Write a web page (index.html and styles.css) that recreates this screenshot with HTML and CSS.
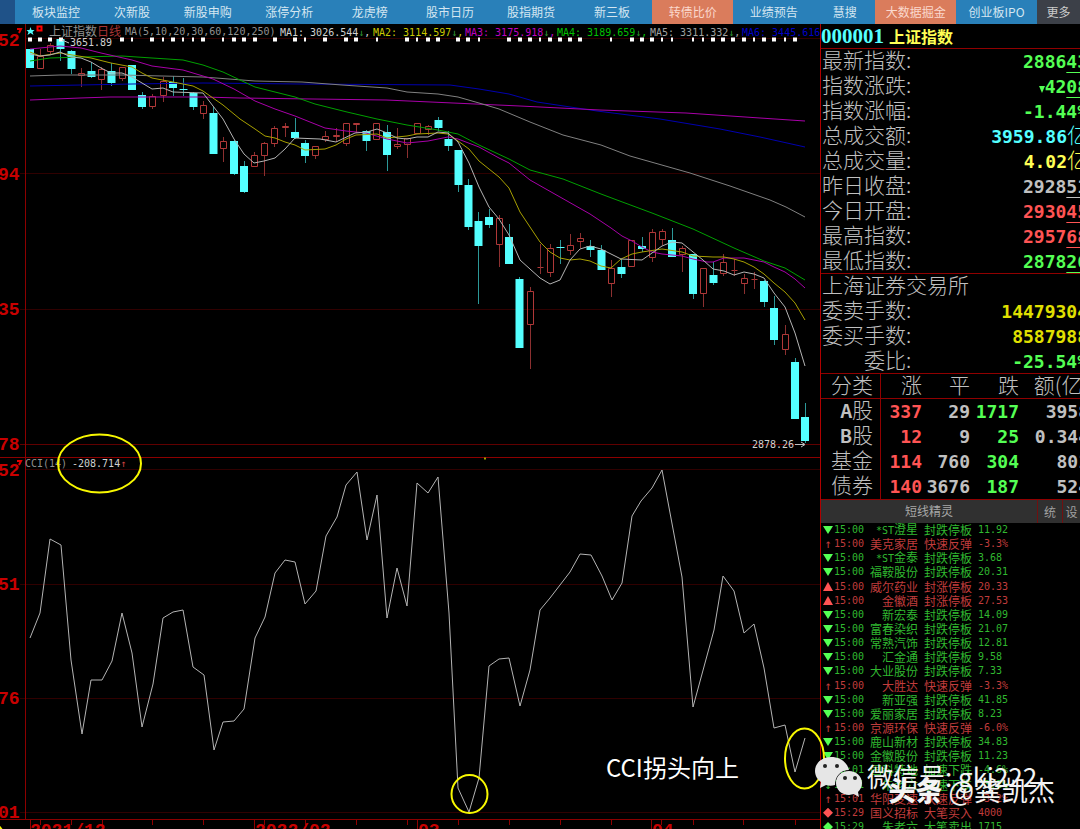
FILE: index.html
```html
<!DOCTYPE html>
<html lang="zh-CN">
<head>
<meta charset="utf-8">
<meta name="viewport" content="width=device-width, initial-scale=1">
<title>上证指数 日线</title>
<link rel="stylesheet" href="styles.css">
</head>
<body>
<div class="app">
<nav class="nav">
<span class="nav-edge"></span>
<a href="#">板块监控</a><a href="#">次新股</a><a href="#">新股申购</a><a href="#">涨停分析</a><a href="#">龙虎榜</a><a href="#">股市日历</a><a href="#">股指期货</a><a href="#">新三板</a><a href="#" class="hot">转债比价</a><a href="#">业绩预告</a><a href="#">慧搜</a><a href="#" class="hot">大数据掘金</a><a href="#">创业板IPO</a><a href="#" class="more">更多</a>
</nav>
<main class="main">
<section class="chart">
<svg viewBox="0 24 820 805" role="img" aria-label="上证指数日线与CCI指标">
<g class="grid">
<path d="M25 38.5H820M20 173.5H820M20 309.5H820M25 469.5H820M20 584.5H820M20 698.5H820M20 812.5H820"/>
<path class="frame" d="M20 444.5H820"/>
<path class="frame strong" d="M25.5 24V819M0 457.5H820M0 819.5H820"/>
<path class="tick" d="M30.5 820v9M40.5 820v5M71.5 820v5M102.5 820v5M152.5 820v5M203.5 820v5M254.5 820v9M264.5 820v5M305.5 820v5M356.5 820v5M407.5 820v5M417.5 820v9M458.5 820v5M509.5 820v5M560.5 820v5M611.5 820v5M651.5 820v9M661.5 820v5M693.5 820v5M743.5 820v5M795.5 820v5"/>
</g>
<g class="axis">
<text x="-2" y="46">52</text><text x="-2" y="180">94</text><text x="-2" y="315">35</text><text x="-2" y="450">78</text><text x="-2" y="476">52</text><text x="-2" y="590">51</text><text x="-2" y="704">76</text><text x="-2" y="818">01</text>
<text x="30" y="836">2021/12</text><text x="255" y="836">2022/02</text><text x="418" y="836">03</text><text x="652" y="836">04</text>
<path d="M17 29h4l-2 4M17 461h4l-2 4"/>
</g>
<path class="ma red-body" d="M37.500 56.500h6v12h-6zM47.500 45.500h6v6h-6zM78.500 73.500h6v2h-6zM98.500 69.500h6v10h-6zM119.500 67.500h6v11h-6zM149.500 96.500h6v10h-6zM160.500 81.500h6v14h-6zM200.500 105.500h6v8h-6zM220.500 141.500h6v7h-6zM251.500 155.500h6v11h-6zM261.500 143.500h6v12h-6zM271.500 128.500h6v15h-6zM282.500 126.500h6v1h-6zM312.500 146.500h6v9h-6zM322.500 136.500h6v3h-6zM333.500 135.500h6v1h-6zM343.500 123.500h6v20h-6zM353.500 123.500h6v1h-6zM373.500 123.500h6v16h-6zM394.500 144.500h6v2h-6zM404.500 138.500h6v6h-6zM414.500 123.500h6v10h-6zM425.500 126.500h6v3h-6zM496.500 218.500h6v26h-6zM527.500 291.500h6v33h-6zM537.500 267.500h6M547.500 248.500h6v24h-6zM567.500 245.500h6v5h-6zM577.500 238.500h6v3h-6zM608.500 268.500h6v15h-6zM628.500 240.500h6v26h-6zM649.500 232.500h6v25h-6zM659.500 231.500h6v8h-6zM679.500 248.500h6v6h-6zM700.500 268.500h6v25h-6zM720.500 262.500h6v11h-6zM731.500 270.500h6M741.500 278.500h6v5h-6zM751.500 279.500h6M782.500 334.500h6v15h-6z"/>
<path class="red-wick" d="M40.500 49V56M50.500 43V45M50.500 52V54M81.500 68V73M81.500 76V87M101.500 67V69M101.500 80V90M122.500 78V81M152.500 94V96M152.500 107V109M163.500 77V81M163.500 96V102M203.500 101V105M203.500 114V119M223.500 137V141M223.500 149V162M254.500 152V155M264.500 142V143M264.500 156V176M274.500 126V128M274.500 144V147M285.500 123V126M285.500 128V137M315.500 156V159M325.500 131V136M325.500 139V142M336.500 128V135M336.500 137V142M346.500 144V146M356.500 125V133M397.500 128V144M397.500 147V149M407.500 145V158M428.500 125V126M428.500 130V135M499.500 215V218M499.500 245V267M530.500 287V291M530.500 325V369M540.500 244V274M550.500 244V248M550.500 273V277M570.500 234V245M570.500 251V255M580.500 233V238M580.500 242V248M611.500 260V268M611.500 284V297M652.500 229V232M652.500 258V262M662.500 229V231M662.500 240V245M682.500 246V248M682.500 255V272M703.500 294V307M723.500 254V262M723.500 274V276M734.500 259V276M744.500 274V278M744.500 284V294M754.500 272V289M785.500 325V334M785.500 350V355"/>
<path class="cyan-wick" d="M60.500 38V61M71.500 50V74M91.500 62V78M111.500 63V86M142.500 92V109M173.500 76V96M183.500 78V96M193.500 92V110M213.500 107V154M234.500 140V175M244.500 161V193M295.500 118V139M305.500 140V163M366.500 130V151M387.500 125V171M438.500 117V131M448.500 131V151M458.500 150V192M468.500 179V230M478.500 212V304M489.500 209V228M509.500 224V264M519.500 277V348M560.500 240V264M590.500 240V257M601.500 245V270M621.500 259V278M642.500 237V252M672.500 228V257M693.500 254V299M713.500 262V285M764.500 280V307M774.500 296V345M795.500 358V419M805.500 403V443"/>
<path class="cyan-body" d="M30 49V68M60.500 39V49M71.500 51V69M91.500 71V77M111.500 71V83M132 65V90M142 95V107M173 82V88M183.500 89V90M193.500 93V107M213.500 113V154M234 141V174M244 166V192M295 132V138M305 143V156M366.500 131V141M387 132V155M438.500 120V128M448.500 139V146M458.500 150V185M468.500 185V227M478.500 221V246M489 217V225M509 237V264M519.500 279V348M560.500 247V248M590.500 246V250M601.500 250V270M621.500 267V274M642 246V249M672 240V257M693 254V294M713.500 275V283M764 281V302M774 308V340M795 362V419M805 417V441"/>
<g class="ma">
<polyline class="blue" points="30,86 132,84 203,83 300,84 450,85 479,89 509,94 537,102 597,111 660,119 720,129 760,137 805,147"/>
<polyline class="magenta" points="30,100 80,98 110,97 203,97 240,98 386,100 520,106 600,110 686,113 760,118 805,121"/>
<polyline class="gray" points="30,76 60,75 122,75 203,77 255,81 302,82 342,85 387,88 407,92 438,94 458,97 479,103 499,109 530,122 563,135 601,145 630,156 690,173 730,186 770,200 786,207 805,217"/>
<polyline class="green" points="30,61 50,58 81,57 122,56 152,58 183,60 203,65 223,72 240,80 255,87 295,97 315,104 347,112 377,119 407,125 438,130 458,134 479,145 509,159 530,170 563,179 601,194 617,200 652,213 693,229 734,248 764,261 785,268 805,280"/>
<polyline class="magenta" points="30,49 60,46 81,48 101,53 132,60 152,66 183,70 213,79 234,89 255,101 275,109 295,116 315,124 325,128 346,131 366,133 387,139 407,143 428,141 448,137 458,139 479,147 499,158 509,163 530,180 560,197 590,214 611,228 622,236 632,241 642,247 652,252 662,254 682,256 693,259 707,262 713,262 724,258 744,258 764,262 774,267 785,272 795,279 805,288"/>
<polyline class="yellow" points="30,52 40,56 60,53 91,58 111,63 132,67 142,73 152,78 173,82 193,86 203,91 223,105 240,119 255,129 265,136 275,138 285,142 295,145 305,150 325,149 336,145 346,139 356,135 377,134 387,138 407,136 417,134 438,133 448,134 458,141 469,149 479,161 499,177 509,188 520,212 530,227 540,242 550,252 560,258 570,260 580,259 590,261 601,266 611,268 621,259 632,254 642,252 662,249 682,252 693,256 713,257 724,257 734,259 744,262 754,267 764,274 774,283 785,292 795,303 805,320"/>
<polyline class="white" points="30,54 40,56 50,55 60,52 71,57 81,58 91,62 101,68 111,73 122,73 132,77 142,83 152,89 163,88 173,92 203,93 213,106 223,119 234,139 244,154 254,163 264,161 275,158 285,149 295,138 320,139 336,142 355,133 367,132 377,129 387,133 397,138 407,139 417,137 428,137 438,132 448,133 458,142 469,163 479,187 489,207 499,219 509,235 520,260 530,269 540,278 550,284 560,280 570,260 580,249 590,246 601,249 621,259 642,260 662,246 672,242 682,243 703,260 713,269 724,271 734,275 744,272 754,274 764,278 774,293 785,307 795,333 805,366"/>
<polyline class="white" points="30,638 40,613 50,539 61,545 71,660 82,734 91,680 102,680 112,661 122,613 132,653 142,727 153,684 163,618 173,612 183,610 193,667 204,675 214,750 223,722 234,721 244,709 255,638 265,617 275,573 285,560 295,562 305,604 316,591 326,536 337,517 346,485 357,472 367,540 377,495 387,618 397,568 407,606 417,483 428,493 438,477 449,613 458,788 469,812 479,778 489,666 499,659 509,658 520,706 530,670 540,610 550,598 570,572 580,554 591,555 602,576 612,600 622,583 632,516 641,501 652,488 662,470 682,577 693,707 714,630 723,576 734,591 744,633 754,624 764,668 774,728 785,725 795,772 805,738"/>
</g>
<path class="dots" d="M28 39.500h4m6 0h4m6 0h4m7 0h4M120 39.500h4M150 39.500h4M171 39.500h4M201 39.500h4M232 39.500h4m6 0h4m7 0h4M273 39.500h4M293 39.500h4M323 39.500h4M344 39.500h4m6 0h4M405 39.500h4M426 39.500h4m6 0h4M456 39.500h4m6 0h4M507 39.500h4m7 0h4m6 0h4M548 39.500h4m6 0h4m6 0h4m6 0h4M630 39.500h4m6 0h4m6 0h4M711 39.500h4m6 0h4m6 0h4m7 0h4M762 39.500h4m6 0h4M793 39.500h4M131 39.500h2M162 39.500h2M182 39.500h2M192 39.500h2M222 39.500h2M304 39.500h2M376 39.500h2M416 39.500h2M478 39.500h2M539 39.500h2M610 39.500h2M661 39.500h2M671 39.500h2M692 39.500h2M702 39.500h2M753 39.500h2M784 39.500h2"/>
<g class="legend">
<path class="star" d="M30.500 27l1 3h3l-2 2 1 3-3-2-3 2 1-3-2-2h3z"/>
<path class="mark" d="M37.500 26.500h4v4h-4z"/>
<text class="cjk dim" x="49" y="36">上证指数</text><text class="cjk daily" x="97" y="36">日线</text>
<text class="dim" x="125" y="35">MA(5,10,20,30,60,120,250)</text>
<text class="c-white" x="280" y="36">MA1: 3026.544<tspan class="down">↓</tspan>,</text>
<text class="c-yellow" x="373" y="36">MA2: 3114.597<tspan class="down">↓</tspan>,</text>
<text class="c-magenta" x="465" y="36">MA3: 3175.918<tspan class="down">↓</tspan>,</text>
<text class="c-green" x="557" y="36">MA4: 3189.659<tspan class="down">↓</tspan>,</text>
<text class="c-gray" x="650" y="36">MA5: 3311.332<tspan class="down">↓</tspan>,</text>
<text class="c-blue" x="742" y="36">MA6: 3445.616</text>
<text class="c-white" x="70" y="46">3651.89</text>
<text class="c-white" x="752" y="448">2878.26</text>
<text class="dim" x="25" y="467">CCI(14)</text><text class="c-white" x="72" y="467">-208.714<tspan class="up">↑</tspan></text>
<path class="pointer" d="M62 40l7 3M795 444.500h9M801 442l4 2.500-4 2.500"/>
<path class="speck" d="M484 458.500h2"/>
</g>
<g class="rings"><ellipse cx="99.500" cy="463.500" rx="41.500" ry="29"/><ellipse cx="469.500" cy="794" rx="18" ry="19"/><ellipse cx="804.500" cy="758.500" rx="19.500" ry="30"/><path d="M-1 826l3 4"/></g>
<text class="note" x="606" y="777">CCI拐头向上</text>
</svg>
</section>
<aside class="side">
<h1 class="title"><span class="code">000001</span>上证指数</h1>
<dl class="quotes">
<div><dt>最新指数:</dt><dd class="g">2886<u>43</u></dd></div>
<div><dt>指数涨跌:</dt><dd class="g"><i class="arrow"></i>42<u>08</u></dd></div>
<div><dt>指数涨幅:</dt><dd class="g">-1.44%</dd></div>
<div><dt>总成交额:</dt><dd class="c">3959.86<b>亿</b></dd></div>
<div><dt>总成交量:</dt><dd class="y">4.02<b>亿</b></dd></div>
<div><dt>昨日收盘:</dt><dd class="w">2928<u>51</u></dd></div>
<div><dt>今日开盘:</dt><dd class="r">2930<u>45</u></dd></div>
<div><dt>最高指数:</dt><dd class="r">2957<u>68</u></dd></div>
<div><dt>最低指数:</dt><dd class="g">2878<u>26</u></dd></div>
</dl>
<dl class="quotes">
<div><dt>上海证券交易所</dt></div>
<div><dt>委卖手数:</dt><dd class="gold">14479304</dd></div>
<div><dt>委买手数:</dt><dd class="gold">8587988</dd></div>
<div><dt class="indent">委比:</dt><dd class="g">-25.54%</dd></div>
</dl>
<table class="breadth">
<thead><tr><th>分类</th><th>涨</th><th>平</th><th>跌</th><th>额(亿)</th></tr></thead>
<tbody>
<tr><th><span>A</span>股</th><td class="r">337</td><td>29</td><td class="g">1717</td><td>3958</td></tr>
<tr><th><span>B</span>股</th><td class="r">12</td><td>9</td><td class="g">25</td><td>0.344</td></tr>
<tr><th>基金</th><td class="r">114</td><td>760</td><td class="g">304</td><td>801</td></tr>
<tr><th>债券</th><td class="r">140</td><td>3676</td><td class="g">187</td><td>524</td></tr>
</tbody>
</table>
<div class="bar"><h2>短线精灵</h2><button type="button">统</button><button type="button">设</button></div>
<ul class="feed">
<li class="fall"><i></i><time>15:00</time><span><em>*ST</em>澄星</span><span>封跌停板</span><data>11.92</data></li>
<li class="jump"><i>↑</i><time>15:00</time><span>美克家居</span><span>快速反弹</span><data>-3.3%</data></li>
<li class="fall"><i></i><time>15:00</time><span><em>*ST</em>金泰</span><span>封跌停板</span><data>3.68</data></li>
<li class="fall"><i></i><time>15:00</time><span>福鞍股份</span><span>封跌停板</span><data>20.31</data></li>
<li class="rise"><i></i><time>15:00</time><span>威尔药业</span><span>封涨停板</span><data>20.33</data></li>
<li class="rise"><i></i><time>15:00</time><span>金徽酒</span><span>封涨停板</span><data>27.53</data></li>
<li class="fall"><i></i><time>15:00</time><span>新宏泰</span><span>封跌停板</span><data>14.09</data></li>
<li class="fall"><i></i><time>15:00</time><span>富春染织</span><span>封跌停板</span><data>21.07</data></li>
<li class="fall"><i></i><time>15:00</time><span>常熟汽饰</span><span>封跌停板</span><data>12.81</data></li>
<li class="fall"><i></i><time>15:00</time><span>汇金通</span><span>封跌停板</span><data>9.58</data></li>
<li class="fall"><i></i><time>15:00</time><span>大业股份</span><span>封跌停板</span><data>7.33</data></li>
<li class="jump"><i>↑</i><time>15:00</time><span>大胜达</span><span>快速反弹</span><data>-3.3%</data></li>
<li class="fall"><i></i><time>15:00</time><span>新亚强</span><span>封跌停板</span><data>41.85</data></li>
<li class="fall"><i></i><time>15:00</time><span>爱丽家居</span><span>封跌停板</span><data>8.23</data></li>
<li class="jump"><i>↑</i><time>15:00</time><span>京源环保</span><span>快速反弹</span><data>-6.0%</data></li>
<li class="fall"><i></i><time>15:00</time><span>鹿山新材</span><span>封跌停板</span><data>34.83</data></li>
<li class="fall"><i></i><time>15:00</time><span>金徽股份</span><span>封跌停板</span><data>11.23</data></li>
<li class="drop"><i>↓</i><time>15:01</time><span>国科特地</span><span>加速下跌</span><data>-4.6%</data></li>
<li class="drop"><i>↓</i><time>15:01</time><span>朱老六</span><span>加速下跌</span><data>-3.2%</data></li>
<li class="jump"><i>↑</i><time>15:01</time><span>华阳变速</span><span>快速反弹</span><data>-3.2%</data></li>
<li class="buy"><i></i><time>15:29</time><span>国义招标</span><span>大笔买入</span><data>4000</data></li>
<li class="sell"><i></i><time>15:29</time><span>朱老六</span><span>大笔卖出</span><data>1715</data></li>
</ul>
</aside>
</main>
<div class="watermark">
<svg class="wechat" viewBox="0 0 48 42" aria-hidden="true">
<path d="M17 1C8 1 1 7 1 15c0 5 3 9 6 11l-1 6 6-3c3 1 6 1 9 0 0-9 6-15 14-15C33 6 26 1 17 1z"/>
<path d="M35 15c-8 0-13 5-13 12s6 12 13 12l5-1 5 3-1-5c2-2 4-5 4-9 0-7-6-12-13-12z"/>
<g class="eyes"><circle cx="11" cy="10" r="2"/><circle cx="23" cy="10" r="2"/><circle cx="31" cy="22" r="2"/><circle cx="41" cy="22" r="2"/></g>
</svg>
<p class="account">微信号: gkj222</p>
<p class="author"><strong>头条</strong> @龚凯杰</p>
</div>
</div>
</body>
</html>
```

FILE: styles.css
```css
* { box-sizing: border-box; margin: 0; padding: 0; }
html, body { height: 100%; background: #000; }
body { color: #c0c0c0; font: 12px/14px "DejaVu Sans Mono", "Noto Sans CJK SC", monospace; overflow: hidden; }
.app { position: relative; display: flex; flex-direction: column; height: 100vh; overflow: hidden; }

.nav {
  display: grid; flex: none; height: 24px; background: #2980b9;
  grid-template-columns: 15px 82fr 70fr 82fr 81fr 80fr 81fr 81fr 81fr 81fr 81fr 61fr 81fr 81fr 43fr;
}
.nav a { display: flex; align-items: center; justify-content: center; color: #d4e6f1; text-decoration: none; font-family: "Noto Sans CJK SC", sans-serif; white-space: nowrap; }
.nav-edge { background: #1f5288; }
.nav .hot { background: #da7c5c; color: #fbd9ce; }
.nav .more { background: #3c4048; color: #ccc; }

.main { display: grid; grid-template-columns: minmax(0, 1fr) 260px; flex: 1; min-height: 0; }
.chart { position: relative; z-index: 1; min-width: 0; }
.chart svg { display: block; width: 100%; overflow: visible; }
.grid path { fill: none; stroke: #300000; }
.grid .frame { stroke: #600000; }
.grid .strong { stroke: #8c0000; }
.grid .tick { stroke: #900000; }
.axis text { fill: #c80000; font: bold 18px "Liberation Mono", monospace; }
.axis path { fill: none; stroke: #e00000; stroke-width: 2; }
.ma, .ma polyline { fill: none; }
.white { stroke: #b4b4b4; }
.gray { stroke: #808080; }
.yellow { stroke: #a8a000; }
.magenta { stroke: #a800a8; }
.green { stroke: #00a000; }
.blue { stroke: #0000b0; }
.red-body { stroke: #b03838; }
.red-wick { stroke: #8c3030; }
.cyan-wick { stroke: #2c9898; }
.cyan-body { stroke: #54ffff; stroke-width: 8; }
.dots { stroke: #fff; stroke-width: 4; fill: none; }
.legend text { font: 10px "DejaVu Sans Mono", "Noto Sans CJK SC", monospace; white-space: pre; }
.legend .cjk { font: 12px "Noto Sans CJK SC", sans-serif; }
.legend path { fill: none; }
.legend .star { fill: #54ffff; }
.legend .mark { stroke: #f00; stroke-width: 2; }
.pointer { stroke: #c0c0c0; }
.speck { stroke: #a0a000; stroke-width: 2; }
.dim { fill: #909090; }
.daily { fill: #a83434; }
.c-white { fill: #d0d0d0; }
.c-gray { fill: #a0a0a0; }
.c-yellow { fill: #c8c800; }
.c-magenta { fill: #c000c0; }
.c-green { fill: #00c000; }
.c-blue { fill: #0000c8; }
.down { fill: #309830; }
.up { fill: #d04040; }
.rings { fill: none; stroke: #f8f800; stroke-width: 2; }
.note { fill: #fff; font: 24px "Noto Sans CJK SC", sans-serif; }

.side { display: flex; flex-direction: column; min-width: 0; min-height: 0; overflow: hidden; border-left: 1px solid #b00000; }
.title { flex: none; display: flex; align-items: center; gap: 5px; height: 25px; border-bottom: 1px solid #900000; color: #ffff54; font: bold 16px/24px "Noto Sans CJK SC", sans-serif; }
.title .code { color: #54ffff; font: bold 21px/24px "Liberation Serif", serif; }
.quotes { flex: none; margin-right: -8px; border-bottom: 1px solid #900000; font-weight: bold; }
.quotes div { display: flex; justify-content: space-between; height: 25px; line-height: 25px; }
.quotes div:last-child { height: 24px; }
.quotes dt { font: 300 21px/21px "Noto Sans CJK SC", sans-serif; padding-left: 1px; white-space: nowrap; }
.quotes .indent { padding-left: 43px; }
.quotes dd { font-size: 18px; white-space: nowrap; }
.quotes dd b { font: 300 21px/21px "Noto Sans CJK SC", sans-serif; }
.quotes u { text-decoration-thickness: 1px; text-underline-offset: 4px; }
.arrow { display: inline-block; border: 3px solid transparent; border-top: 7px solid; border-bottom: 0; }
.g { color: #54ff54; }
.r { color: #ff5454; }
.c { color: #54ffff; }
.y { color: #ffff54; }
.w { color: #c0c0c0; }
.gold { color: #e0e000; }

.breadth { flex: none; width: calc(100% + 9px); table-layout: fixed; border-collapse: separate; border-spacing: 0; text-align: right; }
.breadth th { width: 60px; height: 25px; padding-right: 7px; border-right: 1px solid #900000; font: 300 21px/21px "Noto Sans CJK SC", sans-serif; white-space: nowrap; vertical-align: top; }
.breadth thead th { border-bottom: 1px solid #900000; }
.breadth thead th:not(:first-child) { padding-right: 0; border-right: 0; }
.breadth thead th:nth-child(2) { width: 41px; }
.breadth thead th:nth-child(3) { width: 48px; }
.breadth thead th:nth-child(4) { width: 49px; }
.breadth thead th:nth-child(5) { width: auto; }
.breadth th span { font-weight: bold; font-size: 18px; }
.breadth td { font: bold 18px/24px "DejaVu Sans Mono", monospace; }

.bar { display: flex; flex: none; height: 24px; background: #303030; border-top: 1px solid #900000; }
.bar h2 { flex: 1; text-align: center; font: 12px/22px "Noto Sans CJK SC", sans-serif; color: #a8a8a8; }
.bar button { width: 25px; border: 0; border-left: 1px solid #701010; background: transparent; color: #a0a0a0; font: 12px/22px "Noto Sans CJK SC", sans-serif; }
.bar button:last-child { width: 18px; }

.feed { flex: 1; min-height: 0; display: grid; grid-auto-rows: 1fr; margin-bottom: -5px; list-style: none; color: #30b830; }
.feed li { display: grid; grid-template-columns: 10px 25px 48px 48px 1fr; column-gap: 6px; align-items: center; min-height: 0; padding-left: 2px; line-height: 14px; }
.feed time { margin-left: -5px; font-size: 10px; }
.feed span { font: 12px/12px "Noto Sans CJK SC", sans-serif; text-align: right; white-space: nowrap; }
.feed em { font: 10px/12px "DejaVu Sans Mono", monospace; }
.feed data { font-size: 10px; }
.feed i { font: 12px/12px "DejaVu Sans Mono", monospace; text-align: center; }
.feed .rise, .feed .jump, .feed .buy { color: #c03c3c; }
.fall i { border: 5px solid transparent; border-top: 8px solid #54ff54; border-bottom: 0; }
.rise i { border: 5px solid transparent; border-bottom: 9px solid #ff5454; border-top: 0; }
.buy i, .sell i { height: 10px; clip-path: polygon(50% 0, 100% 50%, 50% 100%, 0 50%); background: #ff5454; }
.sell i { background: #54ff54; }

.watermark { position: absolute; z-index: 2; right: 20px; bottom: 20px; width: 246px; height: 56px; color: #f4f4f4; font: 26px/28px "Noto Sans CJK SC", sans-serif; white-space: nowrap; }
.watermark p { position: absolute; }
.wechat { position: absolute; left: 0; top: 3px; width: 48px; height: 42px; fill: #e6e6e6; }
.wechat .eyes { fill: #222; }
.account { left: 53px; top: 9px; }
.author { right: 5px; top: 23px; font-size: 27px; }
.author strong { font-weight: 900; }
```
